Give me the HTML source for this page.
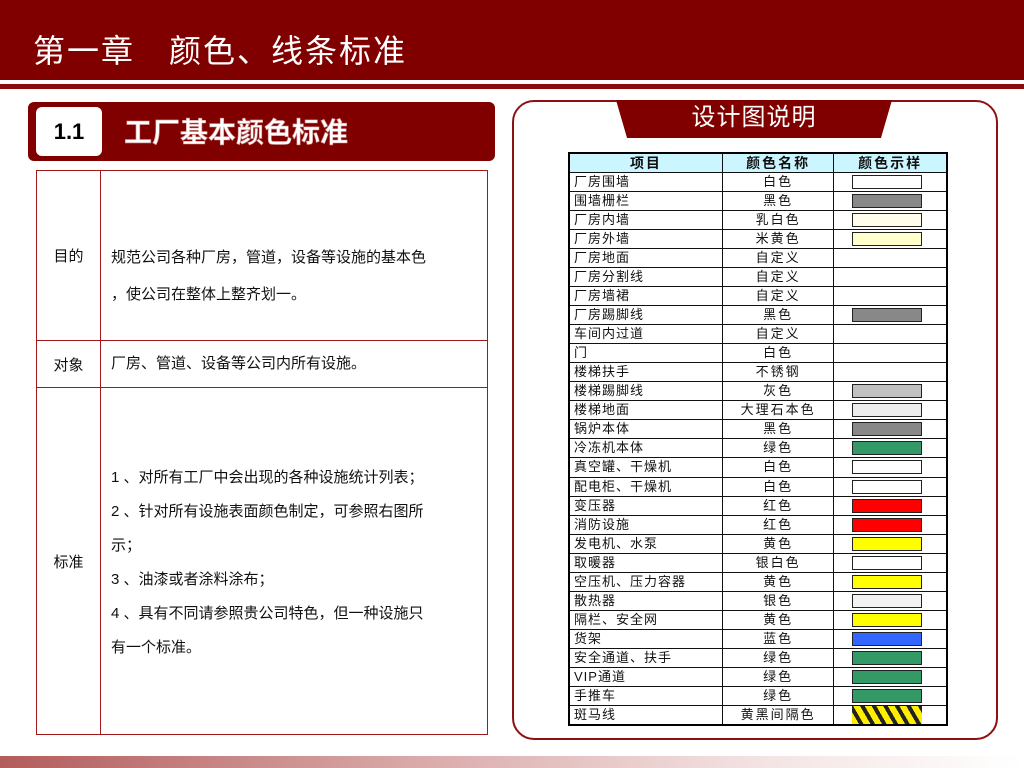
<!DOCTYPE html>
<html><head><meta charset="utf-8"><style>
*{margin:0;padding:0;box-sizing:border-box}
body{width:1024px;height:768px;position:relative;background:#fff;font-family:"Liberation Sans","Noto Sans CJK SC",sans-serif;overflow:hidden}
.hd{position:absolute;left:0;top:0;width:1024px;height:80px;background:#800000}
.l2{position:absolute;left:0;top:84px;width:1024px;height:5px;background:#8b0a0a}
.ttl{position:absolute;left:33px;top:30px;color:#fff;font-size:32px;line-height:42px;letter-spacing:2px}
.sec{position:absolute;left:28px;top:102px;width:467px;height:59px;background:#800000;border-radius:6px}
.num{position:absolute;left:36px;top:107px;width:66px;height:49px;background:#fff;border-radius:6px;font-weight:bold;font-size:22px;text-align:center;line-height:49px;color:#000}
.st{position:absolute;left:124px;top:116px;font-size:28px;color:#fff;font-weight:bold;line-height:34px;-webkit-text-stroke:0.6px #c88}
.lt{position:absolute;left:36px;top:170px;width:452px;border-collapse:collapse;font-size:15px;color:#111}
.lt td{border:1.5px solid #a01818;vertical-align:middle}
.lt td.a{width:64px;text-align:center}
.lt td.b{padding-left:10px;line-height:34px}
.panel{position:absolute;left:512px;top:100px;width:486px;height:640px;border:2.5px solid #8e1010;border-radius:22px}
.tab{position:absolute;left:616px;top:100px;width:276px;height:38px;background:#800000;clip-path:polygon(0 0,100% 0,96% 100%,4% 100%)}
.tabt{position:absolute;left:616px;top:102px;width:276px;text-align:center;color:#fff;font-size:24px;line-height:32px;letter-spacing:1px}
.rt{position:absolute;left:568px;top:152px;width:380px;border-collapse:collapse;font-size:13px;color:#111;border:2px solid #000}
.rt td{border:1.3px solid #111;height:19.07px;padding:0;line-height:16px;white-space:nowrap}
.rt tr.h td{background:#ccf6ff;font-weight:bold;text-align:center;font-size:14px;letter-spacing:2px;height:19px}
.rt td.n{padding-left:4px;width:154px;letter-spacing:1px}
.rt td.c{text-align:center;width:112px;letter-spacing:2px}
.rt td.s{width:114px;position:relative}
.sw{position:absolute;left:18px;top:2px;width:70px;height:14px;border:1.5px solid #222}
.zb{position:absolute;left:0;top:756px;width:1024px;height:12px;background:linear-gradient(90deg,#b35c5c,#d9a8a8 40%,#f4e4e4 75%,#fff)}
</style></head><body>
<div class="hd"></div><div class="l2"></div>
<div class="ttl">第一章　颜色、线条标准</div>
<div class="sec"></div><div class="num">1.1</div>
<div class="st">工厂基本颜色标准</div>
<table class="lt">
<tr style="height:170px"><td class="a">目的</td><td class="b" style="line-height:37px;padding-top:40px">规范公司各种厂房，管道，设备等设施的基本色<br>，使公司在整体上整齐划一。</td></tr>
<tr style="height:47px"><td class="a">对象</td><td class="b">厂房、管道、设备等公司内所有设施。</td></tr>
<tr style="height:347px"><td class="a">标准</td><td class="b" style="padding-top:4px">1 、对所有工厂中会出现的各种设施统计列表；<br>2 、针对所有设施表面颜色制定，可参照右图所<br>示；<br>3 、油漆或者涂料涂布；<br>4 、具有不同请参照贵公司特色，但一种设施只<br>有一个标准。</td></tr>
</table>
<div class="panel"></div>
<div class="tab"></div><div class="tabt">设计图说明</div>
<table class="rt">
<tr class="h"><td>项目</td><td>颜色名称</td><td>颜色示样</td></tr>
<tr><td class="n">厂房围墙</td><td class="c">白色</td><td class="s"><div class="sw" style="background:#fff"></div></td></tr>
<tr><td class="n">围墙栅栏</td><td class="c">黑色</td><td class="s"><div class="sw" style="background:#888"></div></td></tr>
<tr><td class="n">厂房内墙</td><td class="c">乳白色</td><td class="s"><div class="sw" style="background:#fffdec"></div></td></tr>
<tr><td class="n">厂房外墙</td><td class="c">米黄色</td><td class="s"><div class="sw" style="background:#ffffcc"></div></td></tr>
<tr><td class="n">厂房地面</td><td class="c">自定义</td><td class="s"></td></tr>
<tr><td class="n">厂房分割线</td><td class="c">自定义</td><td class="s"></td></tr>
<tr><td class="n">厂房墙裙</td><td class="c">自定义</td><td class="s"></td></tr>
<tr><td class="n">厂房踢脚线</td><td class="c">黑色</td><td class="s"><div class="sw" style="background:#888"></div></td></tr>
<tr><td class="n">车间内过道</td><td class="c">自定义</td><td class="s"></td></tr>
<tr><td class="n">门</td><td class="c">白色</td><td class="s"></td></tr>
<tr><td class="n">楼梯扶手</td><td class="c">不锈钢</td><td class="s"></td></tr>
<tr><td class="n">楼梯踢脚线</td><td class="c">灰色</td><td class="s"><div class="sw" style="background:#c0c0c0"></div></td></tr>
<tr><td class="n">楼梯地面</td><td class="c">大理石本色</td><td class="s"><div class="sw" style="background:#ececec"></div></td></tr>
<tr><td class="n">锅炉本体</td><td class="c">黑色</td><td class="s"><div class="sw" style="background:#888"></div></td></tr>
<tr><td class="n">冷冻机本体</td><td class="c">绿色</td><td class="s"><div class="sw" style="background:#339966"></div></td></tr>
<tr><td class="n">真空罐、干燥机</td><td class="c">白色</td><td class="s"><div class="sw" style="background:#fff"></div></td></tr>
<tr><td class="n">配电柜、干燥机</td><td class="c">白色</td><td class="s"><div class="sw" style="background:#fff"></div></td></tr>
<tr><td class="n">变压器</td><td class="c">红色</td><td class="s"><div class="sw" style="background:#ff0000"></div></td></tr>
<tr><td class="n">消防设施</td><td class="c">红色</td><td class="s"><div class="sw" style="background:#ff0000"></div></td></tr>
<tr><td class="n">发电机、水泵</td><td class="c">黄色</td><td class="s"><div class="sw" style="background:#ffff00"></div></td></tr>
<tr><td class="n">取暖器</td><td class="c">银白色</td><td class="s"><div class="sw" style="background:#fff"></div></td></tr>
<tr><td class="n">空压机、压力容器</td><td class="c">黄色</td><td class="s"><div class="sw" style="background:#ffff00"></div></td></tr>
<tr><td class="n">散热器</td><td class="c">银色</td><td class="s"><div class="sw" style="background:#f2f2f2"></div></td></tr>
<tr><td class="n">隔栏、安全网</td><td class="c">黄色</td><td class="s"><div class="sw" style="background:#ffff00"></div></td></tr>
<tr><td class="n">货架</td><td class="c">蓝色</td><td class="s"><div class="sw" style="background:#3366ff"></div></td></tr>
<tr><td class="n">安全通道、扶手</td><td class="c">绿色</td><td class="s"><div class="sw" style="background:#339966"></div></td></tr>
<tr><td class="n">VIP通道</td><td class="c">绿色</td><td class="s"><div class="sw" style="background:#339966"></div></td></tr>
<tr><td class="n">手推车</td><td class="c">绿色</td><td class="s"><div class="sw" style="background:#339966"></div></td></tr>
<tr><td class="n">斑马线</td><td class="c">黄黑间隔色</td><td class="s"><div class="sw" style="border:none;height:18px;top:0;background:repeating-linear-gradient(60deg,#ffee00 0 6px,#222 6px 10px)"></div></td></tr>
</table>
<div class="zb"></div>
</body></html>
